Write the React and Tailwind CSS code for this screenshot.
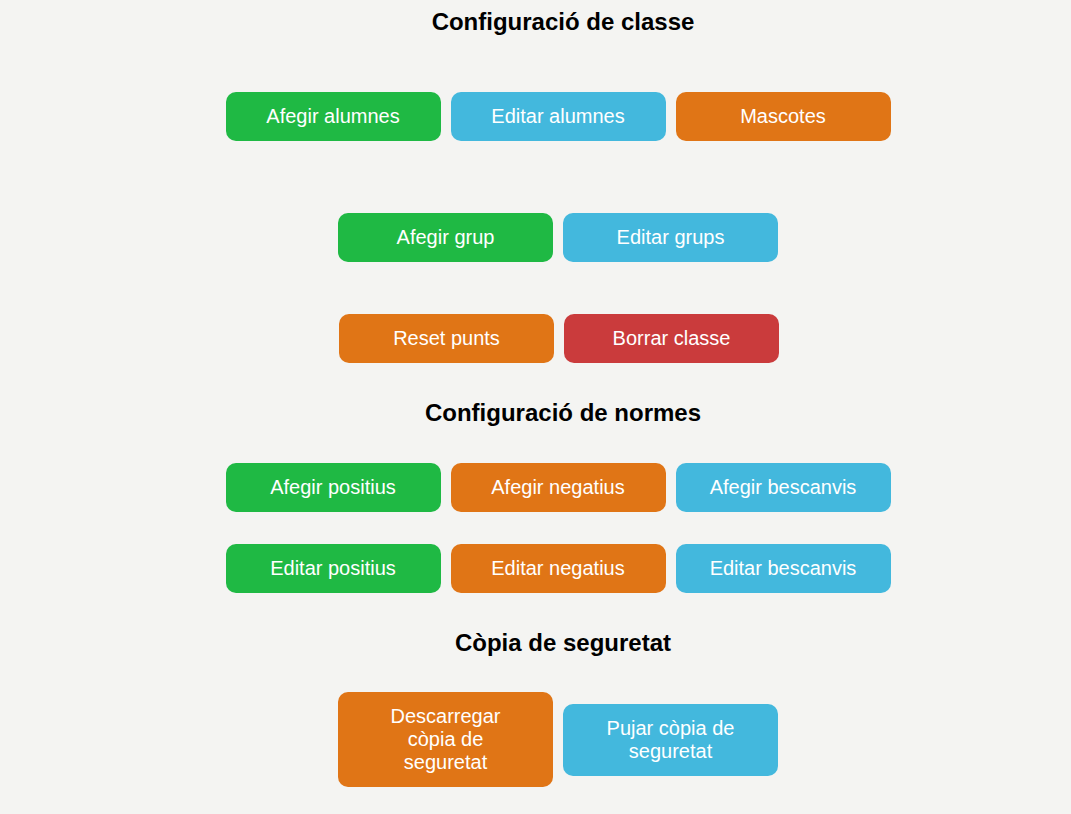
import React from "react";

const COLORS = {
  green: "bg-[#1fb944]",
  blue: "bg-[#43b8dd]",
  orange: "bg-[#e07516]",
  red: "bg-[#ca3b3c]",
};

function Btn({ color, children }) {
  return (
    <button
      className={`${COLORS[color]} w-[215px] mr-[10px] px-[32px] py-[13px] rounded-[10px] text-white text-[20px] leading-[23px] text-center`}
    >
      {children}
    </button>
  );
}

function Row({ children, className = "" }) {
  return <div className={`flex justify-center items-center ${className}`}>{children}</div>;
}

function Title({ children, className = "" }) {
  return (
    <h2 className={`text-center font-bold text-[24px] leading-[28px] text-black ${className}`}>
      {children}
    </h2>
  );
}

export default function App() {
  return (
    <div
      className="min-h-[814px] bg-[#f4f4f2] pl-[55px]"
      style={{ fontFamily: '"Liberation Sans", Arial, sans-serif' }}
    >
      <div className="pt-[8px] flex flex-col">
        <Title>Configuració de classe</Title>
        <Row className="mt-[56px]">
          <Btn color="green">Afegir alumnes</Btn>
          <Btn color="blue">Editar alumnes</Btn>
          <Btn color="orange">Mascotes</Btn>
        </Row>
        <Row className="mt-[72px]">
          <Btn color="green">Afegir grup</Btn>
          <Btn color="blue">Editar grups</Btn>
        </Row>
        <Row className="mt-[52px] pl-[2px]">
          <Btn color="orange">Reset punts</Btn>
          <Btn color="red">Borrar classe</Btn>
        </Row>
        <Title className="mt-[36px]">Configuració de normes</Title>
        <Row className="mt-[36px]">
          <Btn color="green">Afegir positius</Btn>
          <Btn color="orange">Afegir negatius</Btn>
          <Btn color="blue">Afegir bescanvis</Btn>
        </Row>
        <Row className="mt-[32px]">
          <Btn color="green">Editar positius</Btn>
          <Btn color="orange">Editar negatius</Btn>
          <Btn color="blue">Editar bescanvis</Btn>
        </Row>
        <Title className="mt-[36px]">Còpia de seguretat</Title>
        <Row className="mt-[35px]">
          <Btn color="orange">Descarregar còpia de seguretat</Btn>
          <Btn color="blue">Pujar còpia de seguretat</Btn>
        </Row>
      </div>
    </div>
  );
}
